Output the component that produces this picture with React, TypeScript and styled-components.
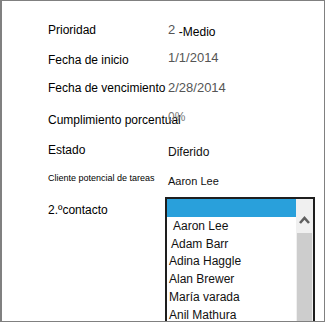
import React from "react";
import styled, { createGlobalStyle } from "styled-components";

const Global = createGlobalStyle`
  html, body { margin: 0; padding: 0; background: #fff; }
  body { font-family: "Liberation Sans", Arial, sans-serif; overflow: hidden; }
`;

const Frame = styled.div`
  box-sizing: border-box;
  width: 325px;
  height: 322px;
  border: 1px solid #808080;
  border-left-width: 2px;
  padding: 14px 0 0 46px;
  overflow: hidden;
  display: flex;
  flex-direction: column;
`;

const Row = styled.div<{ $h?: number; $top?: boolean }>`
  display: grid;
  grid-template-columns: 117px 1fr;
  height: ${(p) => (p.$h ? `${p.$h}px` : "auto")};
  align-items: ${(p) => (p.$top ? "start" : "center")};
  flex-shrink: 0;
`;

const shift = (s?: number) =>
  !s ? "" : s > 0 ? `margin-top: ${s * 2}px;` : `margin-bottom: ${-s * 2}px;`;

const Label = styled.div<{ $small?: boolean; $s?: number; $pt?: number }>`
  font-size: ${(p) => (p.$small ? "9px" : "12px")};
  line-height: 16px;
  color: #000;
  white-space: nowrap;
  ${(p) => shift(p.$s)}
  ${(p) => (p.$pt ? `padding-top: ${p.$pt}px;` : "")}
`;

const Value = styled.div<{ $size?: number; $tone?: "gray" | "dark" | "faint"; $s?: number }>`
  padding-left: 3px;
  font-size: ${(p) => p.$size ?? 12}px;
  line-height: 16px;
  white-space: nowrap;
  color: ${(p) => (p.$tone === "gray" ? "#555" : p.$tone === "faint" ? "#777" : "#111")};
  ${(p) => shift(p.$s)}
`;

const Strong = styled.span<{ $s?: number }>`
  font-size: 12px;
  color: #000;
  display: inline-block;
  ${(p) => (p.$s ? `transform: translateY(${p.$s}px);` : "")}
`;

const ListBox = styled.div`
  margin-top: 2px;
  width: 150px;
  height: 140px;
  box-sizing: border-box;
  border: 2px solid #1e1e1e;
  display: grid;
  grid-template-columns: 1fr 17px;
`;

const Items = styled.div`
  display: flex;
  flex-direction: column;
`;

const Selected = styled.div`
  height: 18px;
  margin-bottom: 1px;
  background: #29a0db;
`;

const Item = styled.div<{ $indent?: number }>`
  font-size: 12px;
  line-height: 17.7px;
  color: #111;
  padding-left: ${(p) => 2 + (p.$indent ?? 0)}px;
  white-space: nowrap;
`;

const ScrollBar = styled.div`
  background: #f0f0f0;
  display: flex;
  flex-direction: column;
  align-items: center;
  padding-top: 17px;
`;

const Arrow = styled.svg`
  width: 11px;
  height: 8px;
  display: block;
`;

const Thumb = styled.div`
  margin-top: 9px;
  width: 15px;
  flex: 1;
  background: #cdcdcd;
`;

const contacts: { name: string; indent?: number }[] = [
  { name: "Aaron Lee", indent: 4 },
  { name: "Adam Barr", indent: 2 },
  { name: "Adina Haggle" },
  { name: "Alan Brewer" },
  { name: "María varada" },
  { name: "Anil Mathura" },
  { name: "Ben Miller" },
];

export default function App() {
  return (
    <>
      <Global />
      <Frame>
        <Row $h={30}>
          <Label>Prioridad</Label>
          <Value $size={13} $tone="gray">
            2 <Strong $s={2}>-Medio</Strong>
          </Value>
        </Row>
        <Row $h={30}>
          <Label>Fecha de inicio</Label>
          <Value $size={13} $tone="gray" $s={-2}>1/1/2014</Value>
        </Row>
        <Row $h={30}>
          <Label $s={-2}>Fecha de vencimiento</Label>
          <Value $size={13} $tone="gray" $s={-2}>2/28/2014</Value>
        </Row>
        <Row $h={30}>
          <Label>Cumplimiento porcentual</Label>
          <Value $tone="faint" $s={-3}>0%</Value>
        </Row>
        <Row $h={30}>
          <Label>Estado</Label>
          <Value $tone="dark" $s={2}>Diferido</Value>
        </Row>
        <Row $h={30}>
          <Label $small $s={-2}>Cliente potencial de tareas</Label>
          <Value $size={11} $tone="dark" $s={1}>Aaron Lee</Value>
        </Row>
        <Row $top>
          <Label $pt={7}>2.ºcontacto</Label>
          <ListBox>
            <Items>
              <Selected />
              {contacts.map((c) => (
                <Item key={c.name} $indent={c.indent}>
                  {c.name}
                </Item>
              ))}
            </Items>
            <ScrollBar>
              <Arrow viewBox="0 0 11 8">
                <path d="M1 7 L5.5 2 L10 7" fill="none" stroke="#606060" strokeWidth="2.6" />
              </Arrow>
              <Thumb />
            </ScrollBar>
          </ListBox>
        </Row>
      </Frame>
    </>
  );
}
